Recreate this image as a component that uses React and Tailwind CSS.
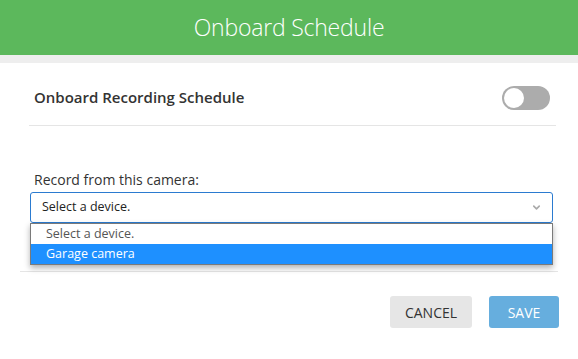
import { ChevronDown } from 'lucide-react'

export default function App() {
  return (
    <div className="w-[578px] h-[359px] bg-white overflow-hidden" style={{ fontFamily: '"Open Sans", "Noto Sans", sans-serif' }}>
      <div className="h-[55px] bg-[#5cb85c] flex items-center justify-center">
        <h1 className="text-white text-[23px] font-light tracking-[-0.2px]">Onboard Schedule</h1>
      </div>
      <div className="h-2 bg-[#eeeeee]" />

      <div className="ml-[29px] mr-[22px] h-[63px] pt-[7px] border-b border-[#e5e5e5] flex items-center justify-between pl-[5px] pr-[6px]">
        <span className="text-[15px] font-semibold text-[#333]">Onboard Recording Schedule</span>
        <div className="w-[48px] h-[24px] rounded-full bg-[#acacac] p-[2px] flex items-center">
          <div className="w-[20px] h-[20px] rounded-full bg-white" />
        </div>
      </div>

      <div className="px-[30px] pr-[25px] pt-[43px]">
        <label className="block text-[14px] text-[#333] pl-[4px] mb-[2px]">Record from this camera:</label>
        <div className="relative">
          <div className="h-[31px] border border-[#2b7bd0] rounded-[3px] flex items-center justify-between pl-[11px] pr-[10px]">
            <span className="text-[12.5px] text-[#222]">Select a device.</span>
            <ChevronDown size={11} strokeWidth={3.5} className="text-[#aaa]" />
          </div>
          <div className="absolute left-0 right-0 top-[31px] border border-[#7a7a7a] bg-white shadow-[0_3px_6px_rgba(0,0,0,0.3)]">
            <div className="h-[20px] pl-[15px] flex items-center text-[12.5px] text-[#555]">Select a device.</div>
            <div className="h-[20px] pl-[15px] flex items-center text-[12.5px] text-white bg-[#1e90ff]">Garage camera</div>
          </div>
        </div>
      </div>

      <div className="mx-[20px] mt-[48px] border-t border-[#e5e5e5]" />

      <div className="flex justify-end gap-[17px] pr-[19px] pt-[24px]">
        <button className="w-[82px] h-[32px] rounded-[3px] bg-[#e6e6e6] text-[#333] text-[14px]">CANCEL</button>
        <button className="w-[70px] h-[32px] rounded-[3px] bg-[#66aede] text-white text-[14px]">SAVE</button>
      </div>
    </div>
  )
}
